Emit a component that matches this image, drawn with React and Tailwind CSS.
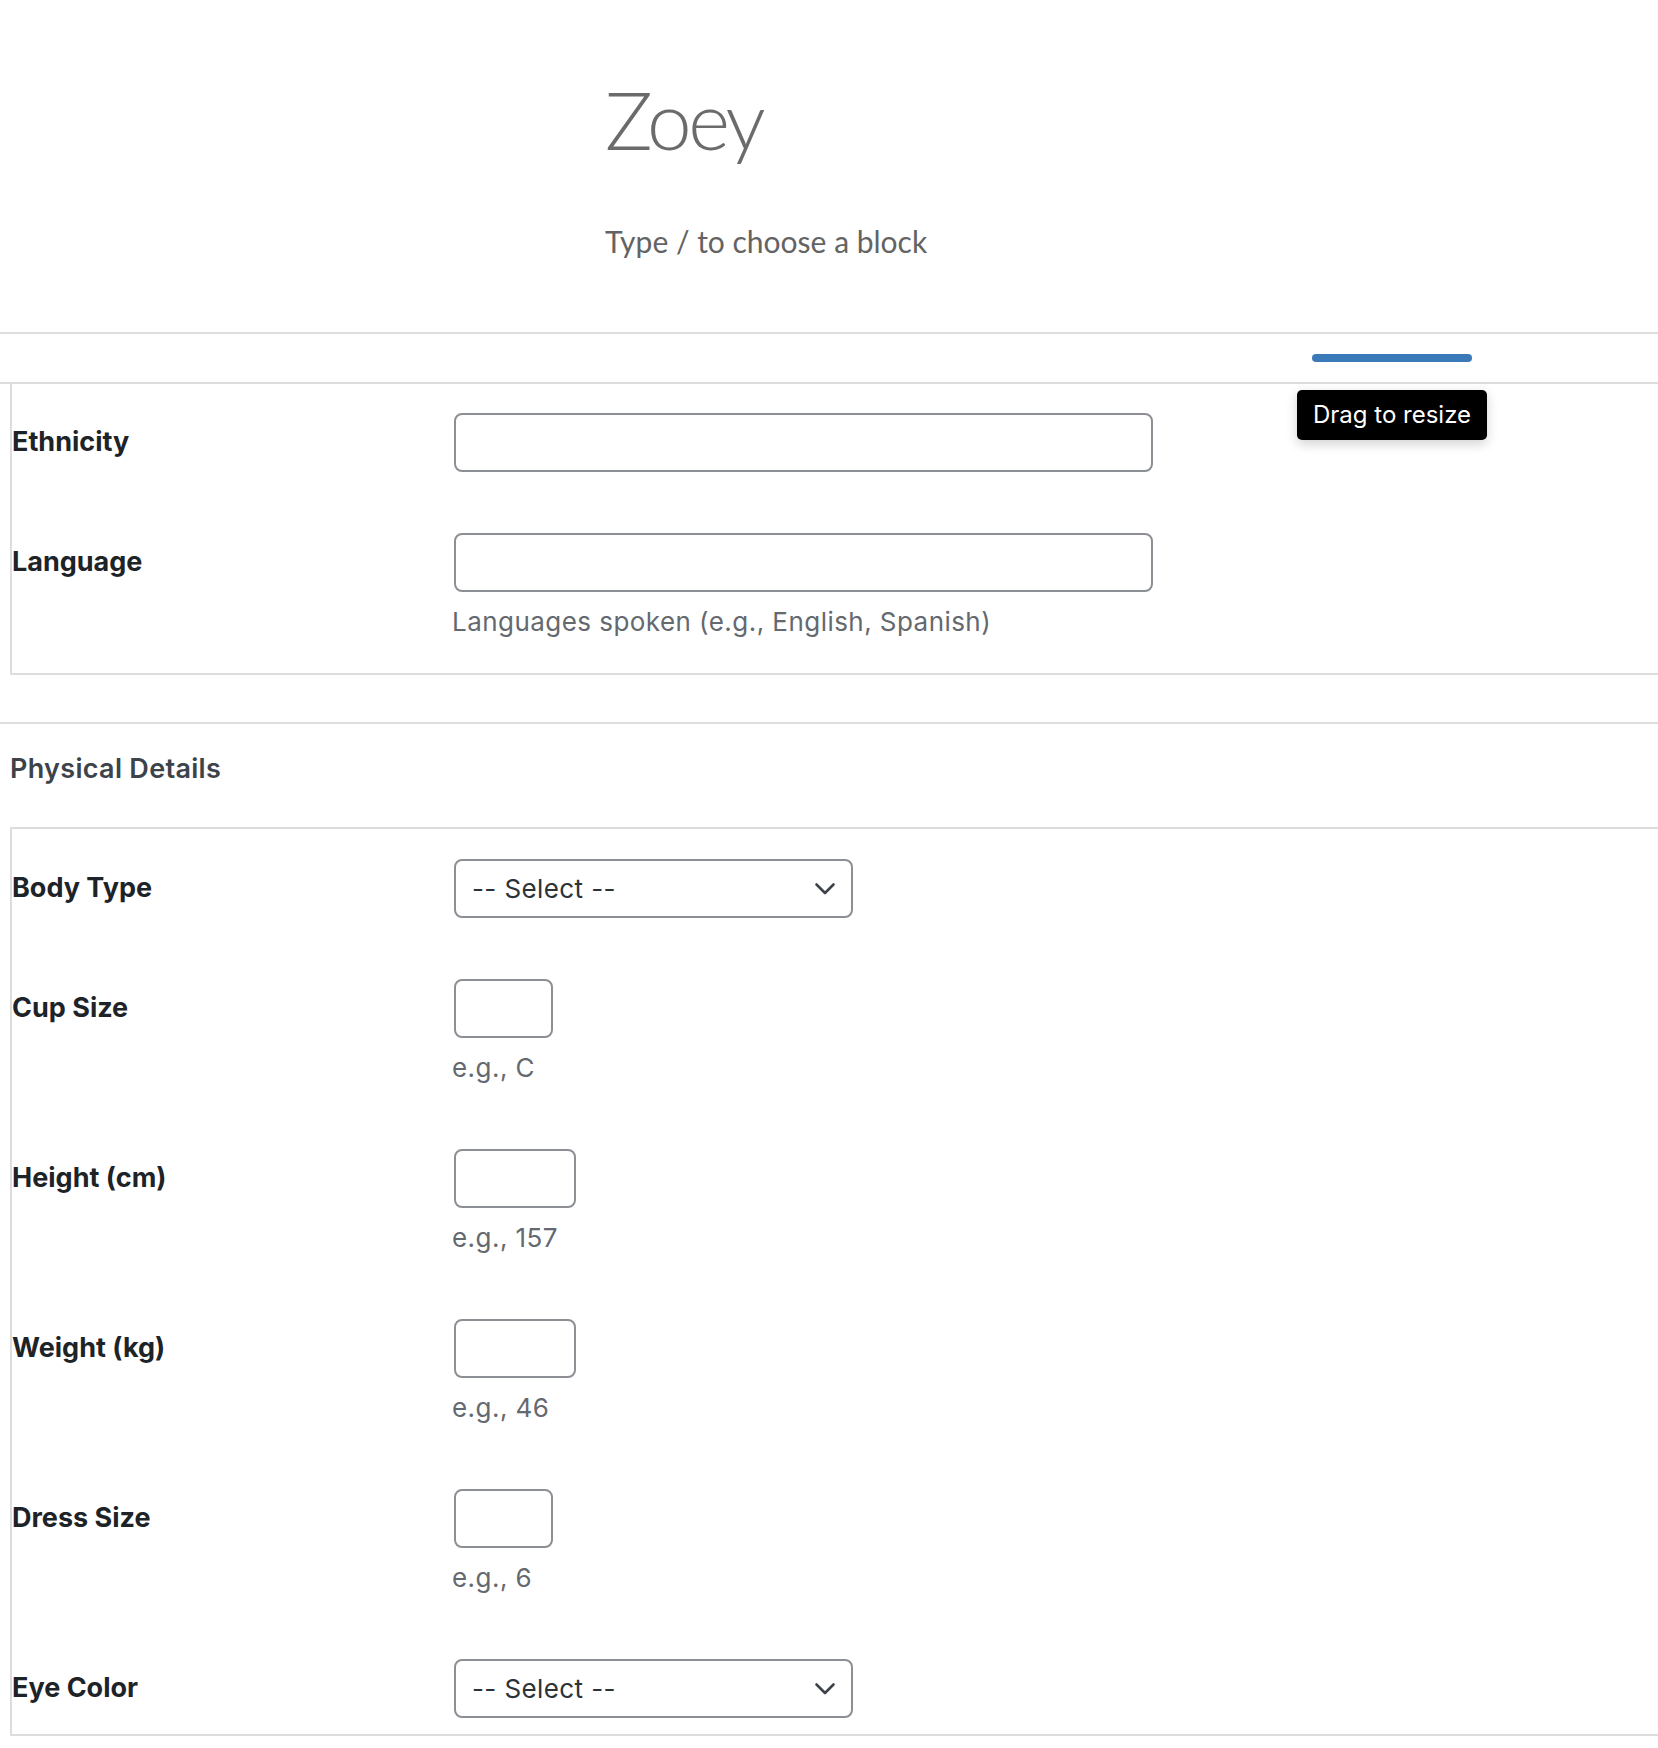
import React from 'react';

const font = { fontFamily: 'Inter, "Noto Sans", sans-serif' };

const Chevron = () => (
  <svg width="22" height="13" viewBox="0 0 22 13" fill="none" className="absolute right-[15px] top-1/2 -translate-y-1/2">
    <path d="M2.5 2 L11 10.5 L19.5 2" stroke="#3c434a" strokeWidth="2.6" strokeLinecap="round" strokeLinejoin="round" />
  </svg>
);

const Field = ({ label, width, help, select }) => (
  <div className="flex pt-[30px] pb-[31px]">
    <div className="w-[442px] h-[59px] flex items-center text-[27px] font-bold text-[#1d2327]">{label}</div>
    <div>
      {select ? (
        <div className={`relative h-[59px] border-2 border-[#8c8f94] rounded-[8px] flex items-center pl-[16px] text-[26px] tracking-[0.4px] text-[#2c3338] ${width}`}>
          -- Select --
          <Chevron />
        </div>
      ) : (
        <div className={`h-[59px] border-2 border-[#8c8f94] rounded-[8px] bg-white ${width}`} />
      )}
      {help && <div className="mt-[10px] leading-[40px] text-[26px] tracking-[0.45px] text-[#646970] -ml-[2px]">{help}</div>}
    </div>
  </div>
);

export default function App() {
  return (
    <div className="w-[1658px] min-h-[1748px] bg-white overflow-hidden" style={font}>
      <div className="pt-[71px] pb-[73px] border-b-2 border-[#dddddd]">
        <div className="w-[448px] mx-auto" style={{ fontFamily: 'Lato, "Noto Sans", sans-serif' }}>
          <div className="text-[80px] leading-[96px] font-light text-[#6b6b6b] tracking-[-3.5px]">Zoey</div>
          <div className="mt-[56px] text-[30px] leading-[36px] text-[#636363]">Type / to choose a block</div>
        </div>
      </div>

      <div className="h-[50px] border-b-2 border-[#dddddd] flex justify-end pr-[186px] pt-[20px]">
        <div className="relative w-[160px] h-[8px] rounded-full bg-[#3a7ab8]">
          <div className="absolute left-1/2 -translate-x-1/2 top-[36px] w-[190px] h-[50px] rounded-[5px] bg-black text-white text-[24px] flex items-center justify-center shadow-[0_4px_12px_rgba(0,0,0,0.18)] z-10">
            Drag to resize
          </div>
        </div>
      </div>

      <div className="ml-[10px] border-l-2 border-b-2 border-[#dddddd] -mt-[1px]">
        <Field label="Ethnicity" width="w-[699px]" />
        <Field label="Language" width="w-[699px]" help="Languages spoken (e.g., English, Spanish)" />
      </div>

      <div className="mt-[47px] border-t-2 border-[#dddddd] pt-[29px] pb-[43px] pl-[10px] text-[27px] leading-[31px] font-semibold tracking-[0.3px] text-[#3c434a]">
        Physical Details
      </div>

      <div className="ml-[10px] border-l-2 border-t-2 border-b-2 border-[#dddddd]">
        <Field label="Body Type" width="w-[399px]" select />
        <Field label="Cup Size" width="w-[99px]" help="e.g., C" />
        <Field label="Height (cm)" width="w-[122px]" help="e.g., 157" />
        <Field label="Weight (kg)" width="w-[122px]" help="e.g., 46" />
        <Field label="Dress Size" width="w-[99px]" help="e.g., 6" />
        <div className="-mb-[15px]">
          <Field label="Eye Color" width="w-[399px]" select />
        </div>
      </div>
    </div>
  );
}
